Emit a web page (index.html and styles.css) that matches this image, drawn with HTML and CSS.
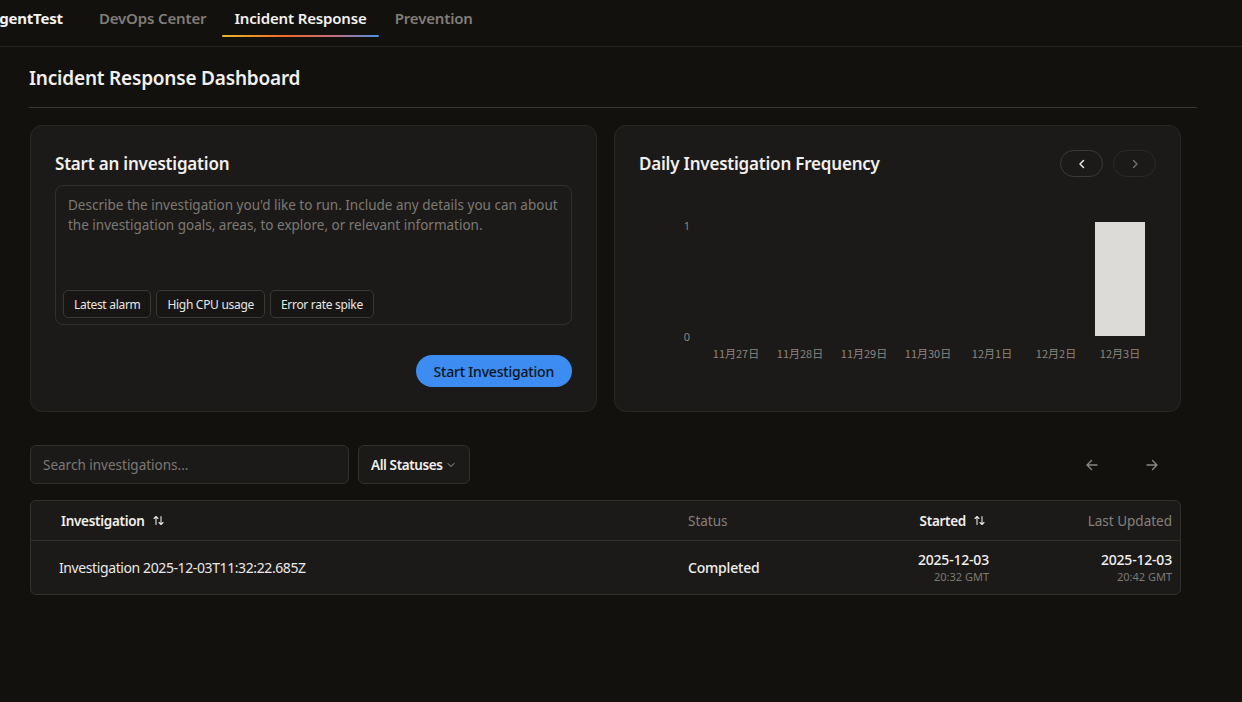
FILE: index.html
```html
<!DOCTYPE html>
<html lang="en">
<head>
<meta charset="utf-8">
<title>Incident Response Dashboard</title>
<link rel="stylesheet" href="styles.css">
</head>
<body>
<header class="topnav">
  <div class="brand">AgentTest</div>
  <nav class="tabs">
    <a class="tab">DevOps Center</a>
    <a class="tab active">Incident Response</a>
    <a class="tab">Prevention</a>
  </nav>
</header>

<main class="page">
  <h1 class="page-title">Incident Response Dashboard</h1>

  <section class="cards">
    <div class="card">
      <h2 class="card-title">Start an investigation</h2>
      <div class="prompt">
        <p class="prompt-placeholder">Describe the investigation you'd like to run. Include any details you can about the investigation goals, areas, to explore, or relevant information.</p>
        <div class="chips">
          <span class="chip">Latest alarm</span>
          <span class="chip">High CPU usage</span>
          <span class="chip">Error rate spike</span>
        </div>
      </div>
      <div class="card-actions">
        <button class="btn-primary">Start Investigation</button>
      </div>
    </div>

    <div class="card">
      <div class="card-head">
        <h2 class="card-title">Daily Investigation Frequency</h2>
        <div class="pager">
          <button class="pill-btn">
            <svg width="12" height="12" viewBox="0 0 12 12"><path d="M7.5 2.5 4 6l3.5 3.5" fill="none" stroke="#e8e6e3" stroke-width="1.5" stroke-linecap="round" stroke-linejoin="round"/></svg>
          </button>
          <button class="pill-btn disabled">
            <svg width="12" height="12" viewBox="0 0 12 12"><path d="M4.5 2.5 8 6l-3.5 3.5" fill="none" stroke="#77736e" stroke-width="1.3" stroke-linecap="round" stroke-linejoin="round"/></svg>
          </button>
        </div>
      </div>
      <div class="chart">
        <div class="y-axis">
          <span>1</span>
          <span>0</span>
        </div>
        <div class="plot">
          <div class="bars">
            <div class="col"><div class="bar" style="height:0%"></div></div>
            <div class="col"><div class="bar" style="height:0%"></div></div>
            <div class="col"><div class="bar" style="height:0%"></div></div>
            <div class="col"><div class="bar" style="height:0%"></div></div>
            <div class="col"><div class="bar" style="height:0%"></div></div>
            <div class="col"><div class="bar" style="height:0%"></div></div>
            <div class="col"><div class="bar" style="height:100%"></div></div>
          </div>
          <div class="x-axis">
            <span>11月27日</span>
            <span>11月28日</span>
            <span>11月29日</span>
            <span>11月30日</span>
            <span>12月1日</span>
            <span>12月2日</span>
            <span>12月3日</span>
          </div>
        </div>
      </div>
    </div>
  </section>

  <section class="toolbar">
    <div class="search">Search investigations...</div>
    <div class="select">All Statuses
      <svg width="10" height="10" viewBox="0 0 10 10"><path d="M2 3.5 5 6.5l3-3" fill="none" stroke="#a19d98" stroke-width="1" stroke-linecap="round" stroke-linejoin="round"/></svg>
    </div>
    <div class="spacer"></div>
    <div class="arrows">
      <svg width="16" height="16" viewBox="0 0 16 16"><path d="M13 8H3M7.5 3.5 3 8l4.5 4.5" fill="none" stroke="#8b8782" stroke-width="1.4" stroke-linecap="round" stroke-linejoin="round"/></svg>
      <svg width="16" height="16" viewBox="0 0 16 16"><path d="M3 8h10M8.5 3.5 13 8l-4.5 4.5" fill="none" stroke="#8b8782" stroke-width="1.4" stroke-linecap="round" stroke-linejoin="round"/></svg>
    </div>
  </section>

  <section class="table">
    <div class="row head">
      <div class="cell strong">Investigation
        <svg class="sort" width="11" height="11" viewBox="0 0 11 11"><path d="M3 9.5V1.5M1 3.5 3 1.5l2 2M8 1.5v8M6 7.5l2 2 2-2" fill="none" stroke="#e8e6e3" stroke-width="1.1" stroke-linecap="round" stroke-linejoin="round"/></svg>
      </div>
      <div class="cell muted">Status</div>
      <div class="cell right strong">Started
        <svg class="sort" width="11" height="11" viewBox="0 0 11 11"><path d="M3 9.5V1.5M1 3.5 3 1.5l2 2M8 1.5v8M6 7.5l2 2 2-2" fill="none" stroke="#e8e6e3" stroke-width="1.1" stroke-linecap="round" stroke-linejoin="round"/></svg>
      </div>
      <div class="cell right muted">Last Updated</div>
    </div>
    <div class="row body">
      <div class="cell name">Investigation 2025-12-03T11:32:22.685Z</div>
      <div class="cell status">Completed</div>
      <div class="cell right stamp"><span class="date">2025-12-03</span><span class="time">20:32 GMT</span></div>
      <div class="cell right stamp"><span class="date">2025-12-03</span><span class="time">20:42 GMT</span></div>
    </div>
  </section>
</main>
</body>
</html>
```

FILE: styles.css
```css
* { box-sizing: border-box; }

html, body {
  margin: 0;
  padding: 0;
  background: #13110e;
  color: #f2f0ed;
  font-family: "Noto Sans", "Open Sans", sans-serif;
  overflow: hidden;
}

button { font-family: inherit; }

/* Top navigation */
.topnav {
  height: 47px;
  display: flex;
  align-items: stretch;
  border-bottom: 1px solid #26231f;
  gap: 24px;
}

.brand {
  margin-left: -11px;
  display: flex;
  align-items: center;
  padding-bottom: 10px;
  font-size: 15px;
  font-weight: 700;
  color: #f4f2ef;
  letter-spacing: -0.2px;
}

.tabs {
  display: flex;
  gap: 4px;
}

.tab {
  position: relative;
  display: flex;
  align-items: center;
  padding: 0 12px 10px;
  font-size: 15px;
  font-weight: 600;
  color: #817d78;
  letter-spacing: -0.15px;
}

.tab.active { color: #f4f2ef; }

.tab.active::after {
  content: "";
  position: absolute;
  left: 0;
  right: 0;
  bottom: 9px;
  height: 2px;
  border-radius: 1px;
  background: linear-gradient(90deg, #e8b82a 0%, #ef6a2c 40%, #c86e7a 70%, #4a8fe6 100%);
}

/* Page body */
.page {
  padding: 0 45px 0 29px;
}

.page-title {
  margin: 0;
  padding: 18px 0 16px;
  font-size: 19px;
  font-weight: 600;
  letter-spacing: -0.2px;
  border-bottom: 1px solid #3a3733;
}

.cards {
  margin: 17px 16px 0 1px;
  display: grid;
  grid-template-columns: 1fr 1fr;
  gap: 17px;
}

.card {
  background: #1c1a18;
  border: 1px solid #2a2724;
  border-radius: 12px;
  padding: 23px 24px 24px 24px;
  height: 287px;
  display: flex;
  flex-direction: column;
}

.card-title {
  margin: 3px 0 0;
  font-size: 17px;
  font-weight: 600;
  letter-spacing: -0.2px;
  line-height: 24px;
}

.prompt {
  margin-top: 9px;
  height: 140px;
  border: 1px solid #33302c;
  border-radius: 8px;
  padding: 9px 7px 6px;
  display: flex;
  flex-direction: column;
  justify-content: space-between;
}

.prompt-placeholder {
  margin: 0;
  padding: 0 5px;
  font-size: 13.5px;
  line-height: 20px;
  color: #7d7974;
}

.chips {
  display: flex;
  gap: 5px;
}

.chip {
  height: 28px;
  padding: 0 10px;
  display: flex;
  align-items: center;
  border: 1px solid #3a3733;
  border-radius: 5px;
  font-size: 12px;
  letter-spacing: -0.3px;
  color: #e8e6e3;
  background: #181614;
}

.card-actions {
  margin-top: auto;
  display: flex;
  justify-content: flex-end;
}

.btn-primary {
  height: 32px;
  padding: 0 18px;
  border: none;
  border-radius: 16px;
  background: #3d8cf2;
  color: #0c1420;
  font-size: 14px;
  font-weight: 500;
  letter-spacing: -0.2px;
}

/* Chart card */
.card-head {
  display: flex;
  align-items: flex-start;
  justify-content: space-between;
}

.pager {
  display: flex;
  gap: 10px;
  margin-top: 1px;
}

.pill-btn {
  width: 43px;
  height: 27px;
  border-radius: 14px;
  border: 1.5px solid #3d3a36;
  background: transparent;
  display: flex;
  align-items: center;
  justify-content: center;
  padding: 0;
}

.pill-btn.disabled { border-color: #2c2926; }

.chart {
  margin-top: 45px;
  display: flex;
  height: 146px;
}

.y-axis {
  width: 65px;
  height: 125px;
  display: flex;
  flex-direction: column;
  justify-content: space-between;
  align-items: flex-end;
  padding-right: 14px;
  font-size: 11px;
  color: #8a8680;
  line-height: 14px;
  margin-top: -3px;
}

.plot {
  width: 448px;
  display: flex;
  flex-direction: column;
}

.bars {
  height: 114px;
  display: grid;
  grid-template-columns: repeat(7, 1fr);
}

.col {
  display: flex;
  align-items: flex-end;
  justify-content: center;
}

.bar {
  width: 50px;
  background: #dddbd8;
}

.x-axis {
  margin-top: 9px;
  display: grid;
  grid-template-columns: repeat(7, 1fr);
  text-align: center;
  font-family: "Noto Sans CJK SC", "Noto Sans", sans-serif;
  font-size: 11px;
  color: #8a8680;
}

/* Toolbar */
.toolbar {
  margin: 33px 16px 0 1px;
  display: flex;
  align-items: center;
  gap: 9px;
}

.search {
  width: 319px;
  height: 39px;
  background: #1c1a18;
  border: 1px solid #33302c;
  border-radius: 6px;
  padding: 0 12px;
  display: flex;
  align-items: center;
  font-size: 13.5px;
  color: #7d7974;
}

.select {
  width: 112px;
  height: 39px;
  background: #1c1a18;
  border: 1px solid #33302c;
  border-radius: 6px;
  padding: 0 10px 0 12px;
  display: flex;
  align-items: center;
  gap: 3px;
  white-space: nowrap;
  font-size: 13.5px;
  font-weight: 600;
  color: #f2f0ed;
  letter-spacing: -0.4px;
}

.spacer { flex: 1; }

.arrows {
  display: flex;
  gap: 44px;
  margin-right: 21px;
}

/* Table */
.table {
  margin: 16px 16px 0 1px;
  background: #1c1a18;
  border: 1px solid #34312d;
  border-radius: 6px;
  overflow: hidden;
}

.row {
  display: grid;
  grid-template-columns: 1fr 172px 129px 183px;
  padding: 0 8px 0 28px;
  align-items: center;
}

.row.head {
  height: 40px;
  border-bottom: 1px solid #34312d;
  font-size: 13.5px;
}

.row.body {
  height: 53px;
  font-size: 14px;
}

.cell.right { text-align: right; }

.cell.strong {
  font-weight: 600;
  color: #f2f0ed;
  letter-spacing: -0.3px;
  display: flex;
  align-items: center;
  gap: 8px;
}

.cell.right.strong { justify-content: flex-end; padding-right: 4px; }

.row.head .cell:first-child { padding-left: 2px; }

.cell.muted { color: #85817c; }

.cell.name {
  color: #ebe9e6;
  letter-spacing: -0.4px;
}

.cell.status { font-weight: 500; letter-spacing: -0.2px; }

.stamp {
  display: flex;
  flex-direction: column;
  align-items: flex-end;
}

.date {
  font-size: 14px;
  font-weight: 500;
  line-height: 18px;
  letter-spacing: -0.2px;
}

.time {
  font-size: 11px;
  color: #7d7974;
  line-height: 15px;
}
```
